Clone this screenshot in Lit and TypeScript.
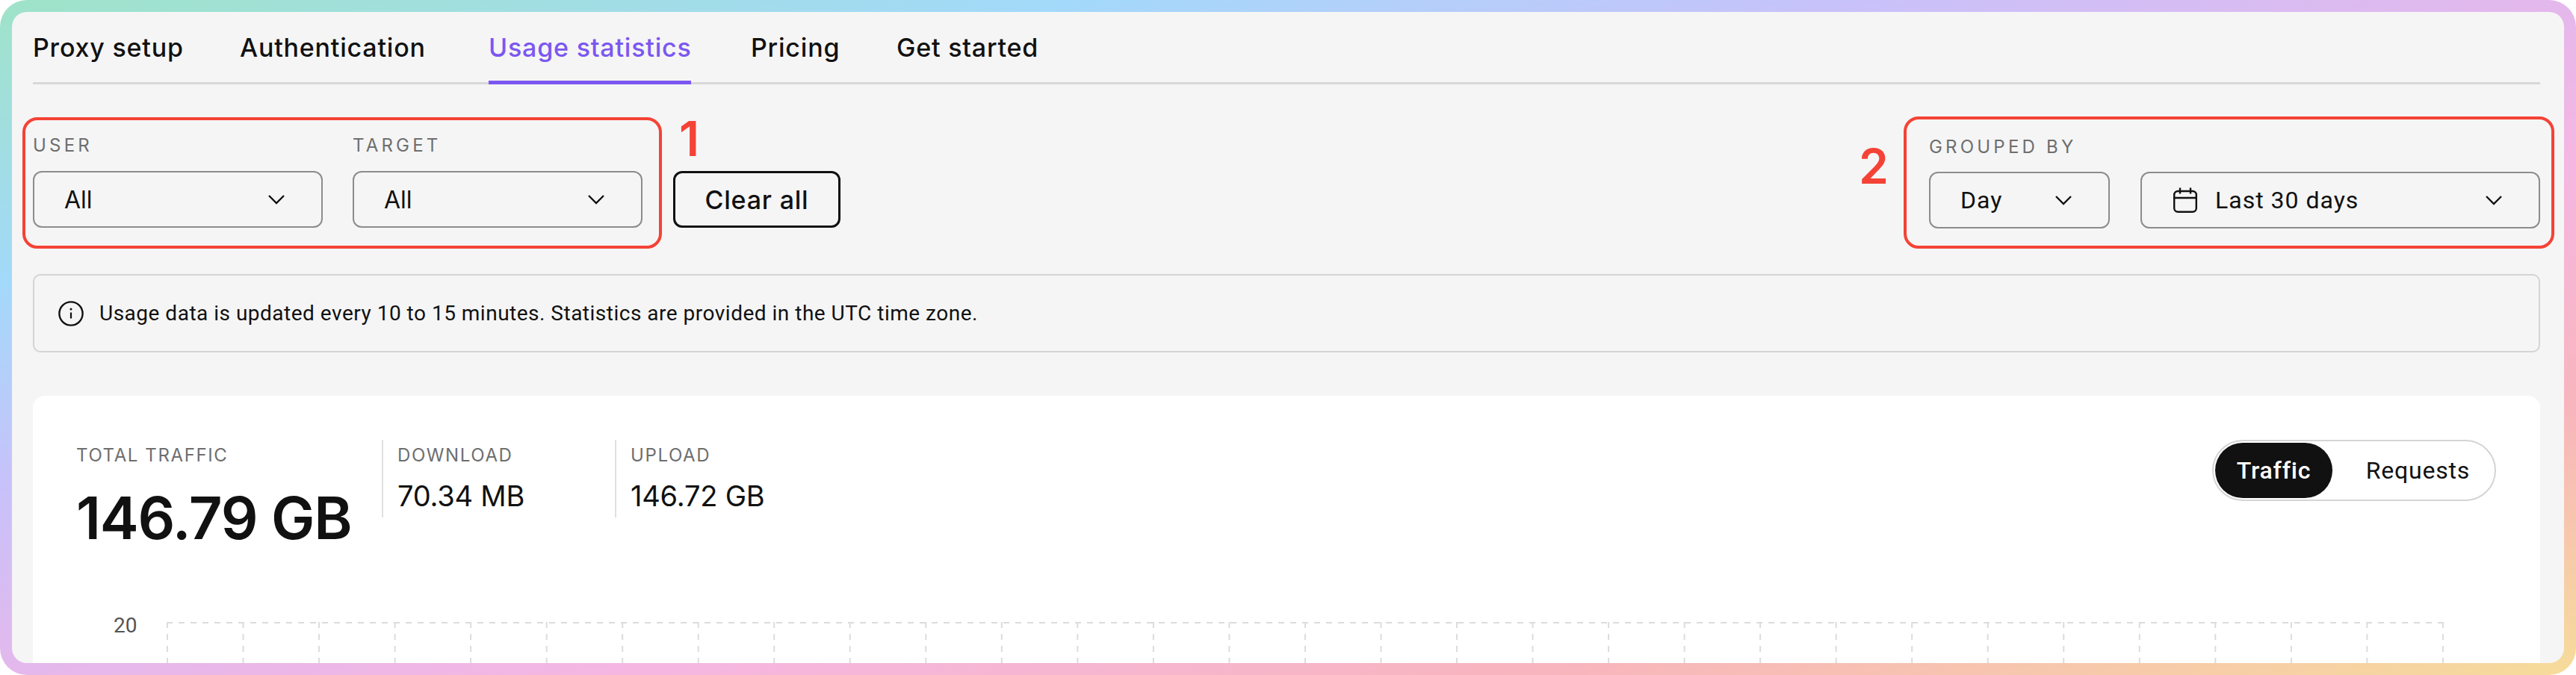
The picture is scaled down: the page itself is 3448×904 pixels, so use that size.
import { LitElement, css, html, svg } from "lit";
import { customElement } from "lit/decorators.js";

const tabs = [
  { label: "Proxy setup", width: 197 },
  { label: "Authentication", width: 253 },
  { label: "Usage statistics", width: 271 },
  { label: "Pricing", width: 115 },
  { label: "Get started", width: 193 },
];

const chevron = html`<svg class="chevron" width="24" height="14" viewBox="0 0 24 14" fill="none">
  <path d="M2 2l10 10L22 2" stroke="#111" stroke-width="2.4" />
</svg>`;

const calendar = html`<svg width="32" height="34" viewBox="0 0 32 34" fill="none" stroke="#111" stroke-width="2.4">
  <rect x="1.2" y="5" width="29.6" height="27.8" rx="5" />
  <path d="M1.2 14h29.6M9 0.5v8M23 0.5v8" />
</svg>`;

const info = html`<svg width="34" height="34" viewBox="0 0 34 34" fill="none">
  <circle cx="17" cy="17" r="15.6" stroke="#111" stroke-width="2.4" />
  <path d="M17 15.5v8" stroke="#111" stroke-width="2.2" />
  <circle cx="17" cy="11" r="1.5" fill="#111" />
</svg>`;

function grid() {
  const step = 101.53;
  const cells = 30;
  const width = step * cells;
  const lines = [];
  for (let i = 0; i <= cells; i++) {
    const x = 1 + i * step;
    lines.push(svg`<line x1=${x} y1="0" x2=${x} y2="60" />`);
  }
  return html`<svg class="grid" width=${width + 2} height="60">
    <g stroke="#dcdcdc" stroke-width="2" stroke-dasharray="8 8">
      <line x1="0" y1="1" x2=${width + 2} y2="1" />
      ${lines}
    </g>
  </svg>`;
}

@customElement("app-root")
export class AppRoot extends LitElement {
  static styles = css`
    :host {
      display: block;
      height: 904px;
      font-family: "Roboto", sans-serif;
      color: #111;
    }
    .frame {
      box-sizing: border-box;
      height: 904px;
      padding: 16px;
      border-radius: 36px;
      background: linear-gradient(
        to bottom right,
        #9fe3c8 0%,
        #a3d9fa 21%,
        #c8c2fa 36%,
        #e4b8ec 50%,
        #f5b6e2 62%,
        #f8b5bd 80%,
        #f6dc9a 100%
      );
    }
    .panel {
      box-sizing: border-box;
      height: 872px;
      padding: 0 32px 0 28px;
      border-radius: 20px;
      background: #f5f5f5;
      overflow: hidden;
    }
    .pop {
      font-family: "Inter", sans-serif;
    }
    .tabs {
      display: flex;
      gap: 80px;
      height: 97px;
      box-sizing: border-box;
      border-bottom: 3px solid #d8d8d8;
    }
    .tab {
      box-sizing: border-box;
      flex: none;
      height: 97px;
      padding-top: 29px;
      font-size: 34px;
      line-height: 38px;
      letter-spacing: 0.8px;
      font-weight: 500;
      white-space: nowrap;
    }
    .tab.active {
      color: #7b57f0;
      border-bottom: 5px solid #7b57f0;
    }
    .filters {
      display: flex;
      justify-content: space-between;
      margin: 43px -19px 0 0;
    }
    .left {
      display: flex;
      margin-top: 1px;
      margin-left: -14px;
      position: relative;
    }
    .group {
      box-sizing: border-box;
      display: flex;
      border: 4px solid #f44336;
      border-radius: 20px;
    }
    .group.user {
      gap: 40px;
      padding: 22px 22px 24px 10px;
    }
    .group.range {
      gap: 41px;
      padding: 25px 15px 22px 30px;
      position: relative;
    }
    .label {
      height: 24px;
      margin-bottom: 22px;
      font-size: 24px;
      line-height: 24px;
      letter-spacing: 4.2px;
      color: #6e6e6e;
      white-space: nowrap;
    }
    .range .label {
      margin-bottom: 21px;
    }
    .select {
      box-sizing: border-box;
      display: flex;
      align-items: center;
      height: 76px;
      padding: 0 48px 0 40px;
      border: 2px solid #8c8c8c;
      border-radius: 12px;
      font-size: 32px;
      letter-spacing: 1px;
    }
    .select .chevron {
      margin-left: auto;
    }
    .select.wide {
      width: 388px;
      font-family: "Inter", sans-serif;
      letter-spacing: 0;
    }
    .select.day {
      width: 242px;
    }
    .select.date {
      width: 535px;
      gap: 24px;
      padding-left: 42px;
    }
    .spacer {
      height: 45px;
    }
    .clear {
      box-sizing: border-box;
      align-self: flex-end;
      width: 224px;
      height: 76px;
      margin: 0 0 28px 15px;
      border: 3px solid #111;
      border-radius: 12px;
      background: transparent;
      color: #111;
      font-size: 34px;
      letter-spacing: 0.8px;
      font-weight: 500;
    }
    .mark {
      position: absolute;
      color: #f44336;
      font-family: "Inter", sans-serif;
      font-size: 64px;
      line-height: 62px;
      font-weight: 600;
    }
    .mark.one {
      left: 879px;
      top: -2px;
    }
    .mark.two {
      left: -64px;
      top: 32px;
    }
    .notice {
      box-sizing: border-box;
      display: flex;
      align-items: center;
      gap: 21px;
      height: 105px;
      margin-top: 34px;
      padding-left: 32px;
      border: 2px solid #d4d4d4;
      border-radius: 10px;
      font-size: 28px;
      letter-spacing: 0.5px;
    }
    .card {
      margin-top: 58px;
      height: 400px;
      padding: 59px 59px 0 58px;
      border-radius: 16px;
      background: #fff;
    }
    .top {
      display: flex;
      justify-content: space-between;
    }
    .stats {
      display: flex;
    }
    .stat {
      box-sizing: border-box;
      height: 104px;
      padding-top: 4px;
    }
    .stat.total {
      width: 409px;
    }
    .stat.down {
      width: 312px;
    }
    .stat.down,
    .stat.up {
      padding-left: 19px;
      border-left: 2px solid #e0e0e0;
    }
    .stat .cap {
      font-size: 24px;
      line-height: 34px;
      letter-spacing: 1.6px;
      color: #6e6e6e;
      white-space: nowrap;
    }
    .stat .big {
      margin-top: 24px;
      font-size: 78px;
      line-height: 86px;
      letter-spacing: -1.2px;
      font-weight: 600;
      white-space: nowrap;
    }
    .stat .small {
      margin-top: 14px;
      font-size: 38px;
      line-height: 46px;
      letter-spacing: -0.2px;
      white-space: nowrap;
    }
    .toggle {
      box-sizing: border-box;
      display: flex;
      align-items: center;
      width: 380px;
      height: 82px;
      padding: 2px;
      border: 2px solid #d4d4d4;
      border-radius: 41px;
      font-size: 32px;
      letter-spacing: 0.8px;
    }
    .toggle span {
      display: flex;
      align-items: center;
      justify-content: center;
      height: 74px;
    }
    .toggle .on {
      width: 157px;
      border-radius: 37px;
      background: #111;
      color: #fff;
      font-weight: 500;
    }
    .toggle .off {
      flex: 1;
      padding-left: 14px;
    }
    .chart {
      display: flex;
      gap: 38px;
      margin-top: 140px;
      margin-left: 50px;
    }
    .axis {
      width: 33px;
      font-size: 28px;
      line-height: 32px;
      color: #555;
      margin-top: -11px;
    }
    .grid {
      display: block;
      flex: none;
    }
  `;

  render() {
    return html`
      <div class="frame">
        <div class="panel">
          <nav class="tabs pop">
            ${tabs.map(
              (t) => html`<div
                class="tab ${t.label === "Usage statistics" ? "active" : ""}"
                style="width: ${t.width}px"
              >
                ${t.label}
              </div>`
            )}
          </nav>
          <div class="filters">
            <div class="left">
              <div class="group user">
                <div>
                  <div class="label pop">USER</div>
                  <div class="select wide">All ${chevron}</div>
                </div>
                <div>
                  <div class="label pop">TARGET</div>
                  <div class="select wide">All ${chevron}</div>
                </div>
              </div>
              <button class="clear pop">Clear all</button>
              <div class="mark one">1</div>
            </div>
            <div class="group range">
              <div class="mark two">2</div>
              <div>
                <div class="label pop">GROUPED BY</div>
                <div class="select day">Day ${chevron}</div>
              </div>
              <div>
                <div class="spacer"></div>
                <div class="select date">${calendar} Last 30 days ${chevron}</div>
              </div>
            </div>
          </div>
          <div class="notice">
            ${info}
            <span>Usage data is updated every 10 to 15 minutes. Statistics are provided in the UTC time zone.</span>
          </div>
          <section class="card">
            <div class="top">
              <div class="stats pop">
                <div class="stat total">
                  <div class="cap">TOTAL TRAFFIC</div>
                  <div class="big">146.79 GB</div>
                </div>
                <div class="stat down">
                  <div class="cap">DOWNLOAD</div>
                  <div class="small">70.34 MB</div>
                </div>
                <div class="stat up">
                  <div class="cap">UPLOAD</div>
                  <div class="small">146.72 GB</div>
                </div>
              </div>
              <div class="toggle">
                <span class="on">Traffic</span>
                <span class="off">Requests</span>
              </div>
            </div>
            <div class="chart">
              <div class="axis">20</div>
              ${grid()}
            </div>
          </section>
        </div>
      </div>
    `;
  }
}
